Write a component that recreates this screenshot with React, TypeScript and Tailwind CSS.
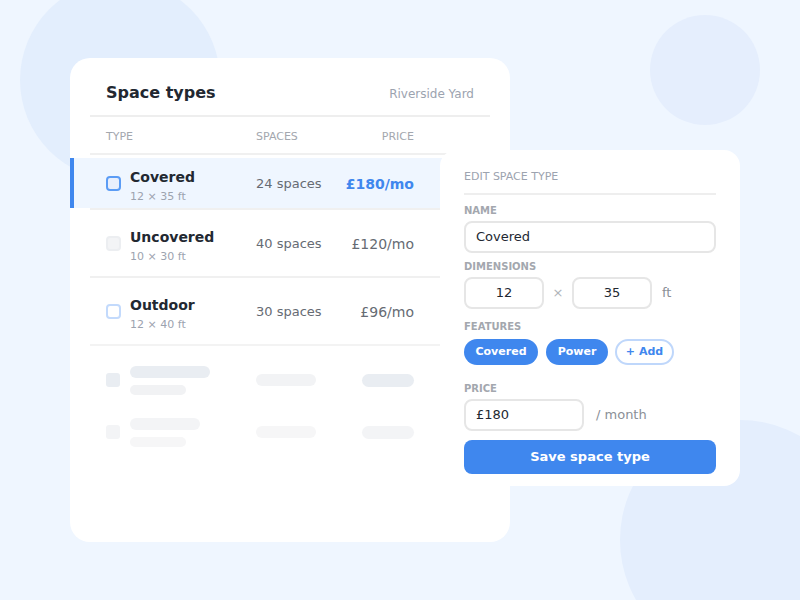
import React from "react";

function Checkbox({ kind }: { kind: "active" | "muted" | "light" }) {
  if (kind === "active")
    return <div className="w-[15px] h-[15px] rounded-[4px] border-2 border-[#5b9cf5] bg-[#e9effc]" />;
  if (kind === "muted")
    return <div className="w-[15px] h-[15px] rounded-[4px] border-2 border-[#eceef1] bg-[#f3f4f6]" />;
  return <div className="w-[15px] h-[15px] rounded-[4px] border-2 border-[#c3dafc] bg-white" />;
}

function RowContent({
  kind,
  name,
  dims,
  spaces,
  price,
  selected,
}: {
  kind: "active" | "muted" | "light";
  name: string;
  dims: string;
  spaces: string;
  price: string;
  selected?: boolean;
}) {
  return (
    <div className="grid grid-cols-[150px_80px_78px] items-center h-full">
      <div className="flex items-center gap-[9px]">
        <Checkbox kind={kind} />
        <div className="flex flex-col mt-[6px]">
          <span className="text-[14px] leading-[18px] font-bold text-[#222831]">{name}</span>
          <span className="text-[11px] leading-[14px] text-[#9ca3af] mt-[4px]">{dims}</span>
        </div>
      </div>
      <span className="text-[13px] text-[#666b73] mt-[2px]">{spaces}</span>
      <span
        className={
          selected
            ? "text-[14px] font-bold text-[#3f87ee] text-right mt-[2px]"
            : "text-[14px] text-[#666b73] text-right mt-[2px]"
        }
      >
        {price}
      </span>
    </div>
  );
}

export default function App() {
  return (
    <div className="relative w-[800px] h-[600px] overflow-hidden bg-[#eff6ff] font-['DejaVu_Sans',sans-serif]">
      <div className="absolute left-[20px] top-[-20px] w-[200px] h-[200px] rounded-full bg-[#e3eefd]" />
      <div className="absolute left-[650px] top-[15px] w-[110px] h-[110px] rounded-full bg-[#e5eefd]" />
      <div className="absolute left-[620px] top-[420px] w-[240px] h-[240px] rounded-full bg-[#e4eefd]" />

      <div className="relative pt-[58px] pl-[70px]">
        <div className="w-[440px] h-[484px] rounded-[20px] bg-white px-5">
          <div className="flex items-center justify-between px-4 pt-[23px] pb-[10px] border-b-2 border-[#eeeeee]">
            <span className="text-[16px] leading-6 font-bold text-[#222831]">Space types</span>
            <span className="text-[12px] text-[#9ca3af] mt-[2px]">Riverside Yard</span>
          </div>
          <div className="grid grid-cols-[150px_80px_78px] items-center h-[38px] pt-[4px] px-4 border-b-2 border-[#f0f0f0] text-[11px] text-[#a3a7ae]">
            <span>TYPE</span>
            <span>SPACES</span>
            <span className="text-right">PRICE</span>
          </div>

          <div className="mt-[3px] h-[52px] border-b-2 border-[#f0f0f0]">
            <div className="-mx-5 h-full bg-[#eff6ff] border-l-4 border-[#3f87ee] pl-[32px]">
              <RowContent kind="active" name="Covered" dims="12 × 35 ft" spaces="24 spaces" price="£180/mo" selected />
            </div>
          </div>
          <div className="h-[68px] px-4 border-b-2 border-[#f0f0f0]">
            <RowContent kind="muted" name="Uncovered" dims="10 × 30 ft" spaces="40 spaces" price="£120/mo" />
          </div>
          <div className="h-[68px] px-4 border-b-2 border-[#f3f3f3]">
            <RowContent kind="light" name="Outdoor" dims="12 × 40 ft" spaces="30 spaces" price="£96/mo" />
          </div>

          <div className="pt-2">
            <div className="h-[52px] px-4 grid grid-cols-[150px_80px_78px] items-center">
              <div className="flex items-center gap-[10px]">
                <div className="w-[14px] h-[14px] rounded-[3px] bg-[#e9edf2]" />
                <div className="flex flex-col gap-[7px]">
                  <div className="w-[80px] h-[12px] rounded-full bg-[#e9edf2]" />
                  <div className="w-[56px] h-[10px] rounded-full bg-[#f1f2f4]" />
                </div>
              </div>
              <div className="w-[60px] h-[12px] rounded-full bg-[#f2f3f5]" />
              <div className="flex justify-end">
                <div className="w-[52px] h-[13px] rounded-full bg-[#e9edf2]" />
              </div>
            </div>
            <div className="h-[52px] px-4 grid grid-cols-[150px_80px_78px] items-center">
              <div className="flex items-center gap-[10px]">
                <div className="w-[14px] h-[14px] rounded-[3px] bg-[#f3f4f6]" />
                <div className="flex flex-col gap-[7px]">
                  <div className="w-[70px] h-[12px] rounded-full bg-[#f3f4f6]" />
                  <div className="w-[56px] h-[10px] rounded-full bg-[#f6f6f7]" />
                </div>
              </div>
              <div className="w-[60px] h-[12px] rounded-full bg-[#f6f6f7]" />
              <div className="flex justify-end">
                <div className="w-[52px] h-[13px] rounded-full bg-[#f3f4f6]" />
              </div>
            </div>
          </div>
        </div>
      </div>

      <div className="absolute left-[440px] top-[150px] w-[300px] h-[336px] rounded-[16px] bg-white px-6 pt-[19px]">
        <div className="pb-[8px] border-b-2 border-[#eeeeee] text-[11px] leading-4 text-[#9ca3af]">EDIT SPACE TYPE</div>

        <div className="mt-[10px] text-[10px] leading-3 font-bold text-[#a3a7ae]">NAME</div>
        <div className="mt-1 h-8 rounded-[8px] border-2 border-[#e6e6e6] flex items-center px-[10px] text-[13px] text-[#222831]">
          Covered
        </div>

        <div className="mt-2 text-[10px] leading-3 font-bold text-[#a3a7ae]">DIMENSIONS</div>
        <div className="mt-1 flex items-center">
          <div className="w-[80px] h-8 rounded-[8px] border-2 border-[#e6e6e6] flex items-center justify-center text-[13px] text-[#222831]">
            12
          </div>
          <span className="w-[28px] text-center text-[13px] text-[#b0b4ba]">×</span>
          <div className="w-[80px] h-8 rounded-[8px] border-2 border-[#e6e6e6] flex items-center justify-center text-[13px] text-[#222831]">
            35
          </div>
          <span className="ml-[10px] text-[13px] text-[#8a8f97]">ft</span>
        </div>

        <div className="mt-3 text-[10px] leading-3 font-bold text-[#a3a7ae]">FEATURES</div>
        <div className="mt-[6px] flex items-center">
          <span className="w-[74px] h-[26px] rounded-full bg-[#3f87ee] text-white text-[11px] font-bold flex items-center justify-center">Covered</span>
          <span className="ml-2 w-[62px] h-[26px] rounded-full bg-[#3f87ee] text-white text-[11px] font-bold flex items-center justify-center">Power</span>
          <span className="ml-[7px] w-[59px] h-[26px] rounded-full border-2 border-[#bfd7fb] text-[#3f87ee] text-[11px] font-bold flex items-center justify-center">+ Add</span>
        </div>

        <div className="mt-[18px] text-[10px] leading-3 font-bold text-[#a3a7ae]">PRICE</div>
        <div className="mt-1 flex items-center">
          <div className="w-[120px] h-8 rounded-[8px] border-2 border-[#e6e6e6] flex items-center px-[10px] text-[13px] text-[#222831]">
            £180
          </div>
          <span className="ml-3 text-[13px] text-[#8a8f97]">/ month</span>
        </div>

        <button className="mt-[9px] w-full h-[34px] rounded-[8px] bg-[#3f87ee] text-white text-[13px] font-bold flex items-center justify-center">
          Save space type
        </button>
      </div>
    </div>
  );
}
